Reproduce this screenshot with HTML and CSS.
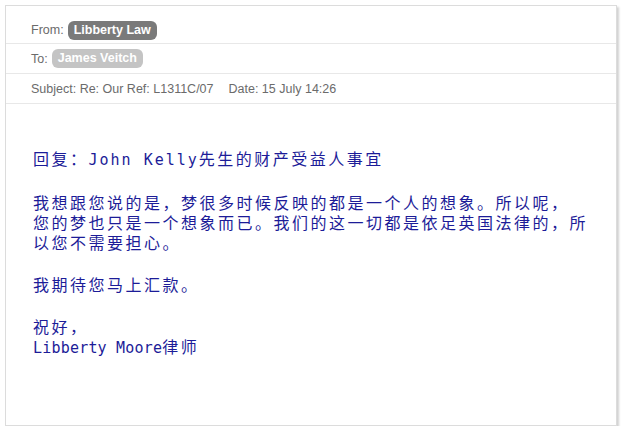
FILE: index.html
```html
<!DOCTYPE html>
<html lang="zh">
<head>
    <meta charset="UTF-8">
    <meta name="viewport" content="width=device-width, initial-scale=1.0">
    <title>Re: Our Ref: L1311C/07</title>
    <link rel="stylesheet" href="styles.css">
</head>
<body>
    <div class="mail">
        <div class="field from">
            <span>From:</span>
            <span class="tag dark">Libberty Law</span>
        </div>
        <div class="field">
            <span>To:</span>
            <span class="tag light">James Veitch</span>
        </div>
        <div class="field">
            <span>Subject: Re: Our Ref: L1311C/07</span>
            <span class="date">Date: 15 July 14:26</span>
        </div>

        <div class="letter">
            <p>回复：<span class="en wide">John Kelly</span>先生的财产受益人事宜</p>
            <p>我想跟您说的是，梦很多时候反映的都是一个人的想象。所以呢，<br>您的梦也只是一个想象而已。我们的这一切都是依足英国法律的，所<br>以您不需要担心。</p>
            <p>我期待您马上汇款。</p>
            <p>祝好，<br><span class="en">Libberty Moore</span>律师</p>
        </div>
    </div>
</body>
</html>
```

FILE: styles.css
```css
body {
    margin: 0;
    background-color: #fff;
    font-family: "Liberation Sans", Arial, sans-serif;
}

.mail {
    margin: 5px 0 0 5px;
    width: 610px;
    height: 419px;
    border: 1px solid #dcdcdc;
    box-shadow: 2px 2px 2px rgba(0, 0, 0, 0.18);
    background-color: #fff;
}

.field {
    display: flex;
    align-items: center;
    gap: 4px;
    box-sizing: border-box;
    height: 30px;
    padding: 0 25px;
    border-bottom: 1px solid #e8e8e8;
    font-size: 12.5px;
    color: #6b6b6b;
}

.field.from {
    height: 38px;
    padding-top: 11px;
}

.field .date {
    margin-left: 11px;
}

.tag {
    color: #fff;
    font-weight: bold;
    border-radius: 6px;
    padding: 2px 6px;
    line-height: 15px;
}

.tag.dark {
    background-color: #7a7a7a;
}

.tag.light {
    background-color: #c4c4c4;
}

.letter {
    padding: 44px 0 0 27px;
    color: #1c1c98;
    font-family: "Noto Sans CJK SC", sans-serif;
    font-size: 16px;
    letter-spacing: 2.5px;
    line-height: 20px;
    white-space: nowrap;
}

.letter p {
    margin: 0 0 22px;
}

.en {
    font-family: "DejaVu Sans Mono", monospace;
    font-size: 15px;
    letter-spacing: 0.2px;
}

.en.wide {
    letter-spacing: 2px;
}
```
